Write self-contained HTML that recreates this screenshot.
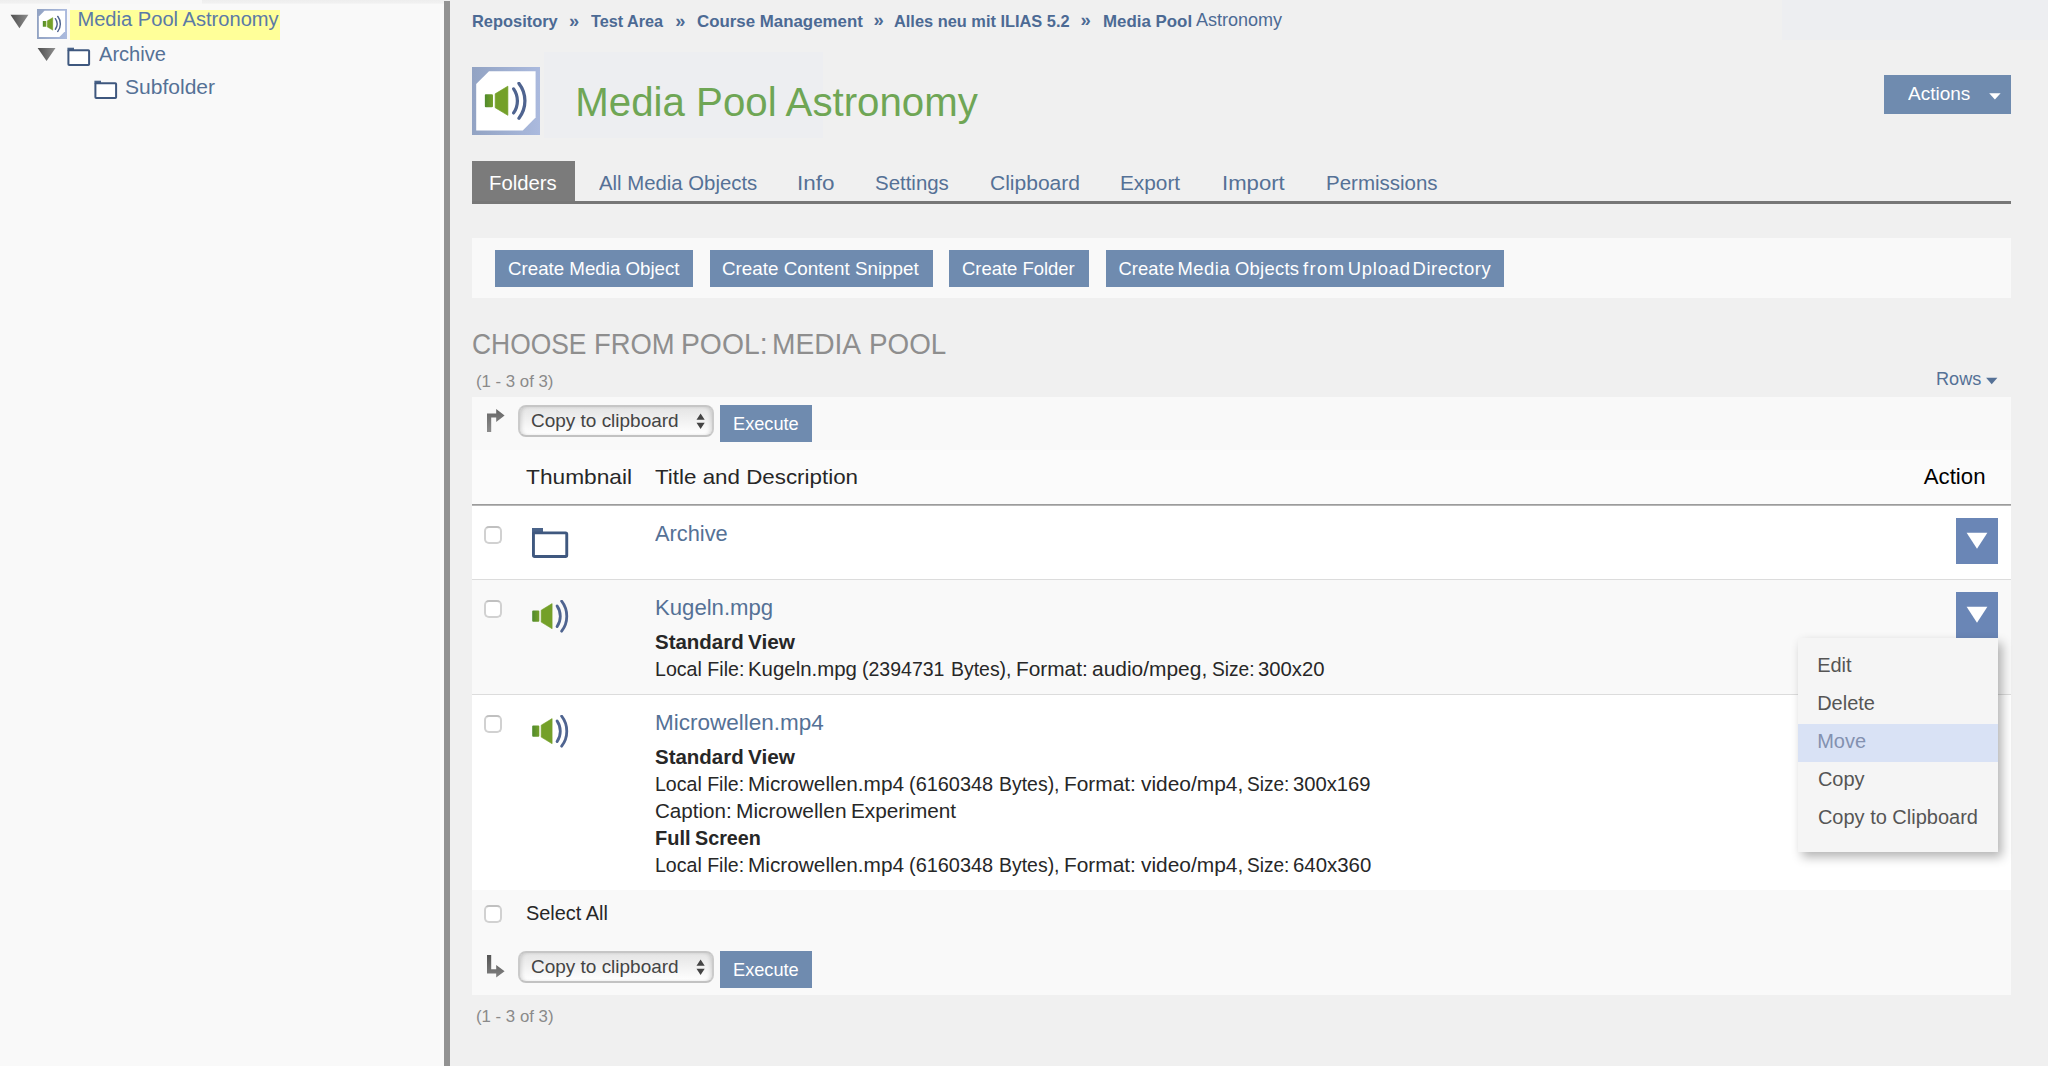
<!DOCTYPE html>
<html><head><meta charset="utf-8"><title>Media Pool Astronomy</title>
<style>
html,body{margin:0;padding:0}
body{width:2048px;height:1066px;overflow:hidden;position:relative;background:#f0f0f0;font-family:"Liberation Sans",sans-serif}
.a{position:absolute}
.t{position:absolute;white-space:nowrap;line-height:1;font-family:"Liberation Sans",sans-serif}
.btn{position:absolute;background:#6f8baf}
.cb{position:absolute;width:14px;height:14px;border:2px solid #d1d1d1;border-top-color:#c0c0c0;border-radius:5px;background:#fff}
.sel{position:absolute;width:192.4px;height:28.3px;border:2px solid #cbcbcb;border-top-color:#c6c6c6;border-bottom-color:#c2c2c2;border-radius:8px;background:linear-gradient(#e4e4e4,#f3f3f3 55%,#ffffff);box-shadow:inset 3px 0 4px -2px rgba(0,0,0,.16),inset -3px 0 4px -2px rgba(0,0,0,.16)}
</style></head><body>
<svg width="0" height="0" style="position:absolute">
<defs>
<linearGradient id="gfr" x1="0" y1="0" x2="1" y2="0"><stop offset="0" stop-color="#92a3c3"/><stop offset="1" stop-color="#abbade"/></linearGradient>
<linearGradient id="gtri" x1="0" y1="0" x2="1" y2="0"><stop offset="0" stop-color="#4e4e4e"/><stop offset="1" stop-color="#8e8e8e"/></linearGradient>
<linearGradient id="garr" x1="0" y1="0" x2="0" y2="1"><stop offset="0" stop-color="#666"/><stop offset="1" stop-color="#8c8c8c"/></linearGradient>
<linearGradient id="garr2" x1="0" y1="0" x2="0" y2="1"><stop offset="0" stop-color="#555"/><stop offset="1" stop-color="#808080"/></linearGradient>
<linearGradient id="ggr" x1="0" y1="0" x2="1" y2="0"><stop offset="0" stop-color="#4f8a2c"/><stop offset="1" stop-color="#74a029"/></linearGradient>
<symbol id="snd" viewBox="0 0 37 33">
<rect x="0.2" y="10.6" width="7.1" height="11.2" rx="1" fill="url(#ggr)"/>
<path d="M9.2 10.2 L20.1 3.6 L20.1 28.7 L9.2 22.1 Z" fill="#74a029" stroke="#74a029" stroke-width="0.6" stroke-linejoin="round"/>
<path d="M25.05 5.9 A18.1 18.1 0 0 1 25.05 26.6" fill="none" stroke="#4f6490" stroke-width="2.8" stroke-linecap="round"/>
<path d="M29.65 1.2 A24.5 24.5 0 0 1 29.65 31.2" fill="none" stroke="#4f6490" stroke-width="2.8" stroke-linecap="round"/>
</symbol>
<symbol id="sndf" viewBox="0 0 68 68">
<rect x="0" y="0" width="68" height="68" fill="url(#gfr)"/>
<path d="M17 4.2 L63.6 4.2 L63.6 50.6 L50.8 63.6 L4.2 63.6 L4.2 17 Z" fill="#fff"/>
<use href="#snd" x="12.5" y="15" width="43" height="38.35"/>
</symbol>
<symbol id="fld" viewBox="0 0 37 31">
<rect x="0" y="0" width="11" height="6" fill="#4a6389"/>
<rect x="1.45" y="4.75" width="33.4" height="24" rx="1.2" fill="#fff" stroke="#3f587f" stroke-width="2.9"/>
</symbol>
<symbol id="fldt" viewBox="0 0 37 31">
<rect x="0" y="0" width="11" height="6" fill="#4a6389"/>
<rect x="1.6" y="4.6" width="33.4" height="24.4" rx="1.2" fill="#fff" stroke="#3f587f" stroke-width="3.2"/>
</symbol>
</defs></svg>

<!-- left panel -->
<div class="a" style="left:0;top:0;width:444px;height:1066px;background:#f9f9f9"></div>
<div class="a" style="left:0;top:0;width:444px;height:4px;background:linear-gradient(#eeeeee,#f1f1f1 70%,#f6f6f6)"></div>
<div class="a" style="left:70px;top:0;width:132px;height:4px;background:#f8f8f8"></div>
<div class="a" style="left:444px;top:1px;width:6px;height:1065px;background:#929292"></div>

<!-- faint patches -->
<div class="a" style="left:543.6px;top:52.3px;width:279.8px;height:86.1px;background:#edeef1"></div>
<div class="a" style="left:1782px;top:0;width:266px;height:40px;background:#edeef1"></div>

<!-- tree -->
<svg class="a" style="left:10px;top:14px" width="19" height="15" viewBox="0 0 19 15"><path d="M0.5 0.8 L18.4 0.8 L9.45 14.2 Z" fill="url(#gtri)"/></svg>
<svg class="a" style="left:37px;top:9px" width="30" height="30"><use href="#sndf" width="30" height="30"/></svg>
<div class="a" style="left:70px;top:10px;width:210px;height:30px;background:#ffff99"></div>
<svg class="a" style="left:37px;top:47px" width="19" height="15" viewBox="0 0 19 15"><path d="M0.6 1 L18.5 1 L9.55 14.1 Z" fill="url(#gtri)"/></svg>
<svg class="a" style="left:67px;top:47px" width="24" height="20" viewBox="0 0 24 20"><rect x="0.4" y="0.7" width="6.6" height="3.2" fill="#4a6389"/><rect x="1.4" y="3.3" width="20.7" height="14.7" rx="0.8" fill="#fff" stroke="#3f587f" stroke-width="2"/></svg>
<svg class="a" style="left:94.1px;top:80px" width="24" height="20" viewBox="0 0 24 20"><rect x="0.4" y="0.7" width="6.6" height="3.2" fill="#4a6389"/><rect x="1.4" y="3.3" width="20.7" height="14.7" rx="0.8" fill="#fff" stroke="#3f587f" stroke-width="2"/></svg>

<!-- title icon -->
<svg class="a" style="left:472px;top:67px" width="68" height="68"><use href="#sndf" width="68" height="68"/></svg>

<!-- tabs -->
<div class="a" style="left:472px;top:161px;width:102.8px;height:42px;background:#7b7b7b"></div>
<div class="a" style="left:472px;top:201px;width:1539px;height:2.7px;background:#777777"></div>

<!-- actions button -->
<div class="btn" style="left:1883.6px;top:75px;width:127.6px;height:39px"></div>
<svg class="a" style="left:1989px;top:93px" width="12" height="7" viewBox="0 0 12 7"><path d="M0.2 0.2 L11.6 0.2 L5.9 6.6 Z" fill="#fff"/></svg>

<!-- toolbar -->
<div class="a" style="left:472px;top:238.4px;width:1539px;height:59.8px;background:#f9f9f9"></div>
<div class="btn" style="left:494.8px;top:249.6px;width:198.2px;height:37.2px"></div>
<div class="btn" style="left:709.6px;top:249.6px;width:223px;height:37.2px"></div>
<div class="btn" style="left:948.9px;top:249.6px;width:140px;height:37.2px"></div>
<div class="btn" style="left:1105.9px;top:249.6px;width:398.5px;height:37.2px"></div>

<!-- rows caret -->
<svg class="a" style="left:1986px;top:377px" width="12" height="8" viewBox="0 0 12 8"><path d="M0.1 0.7 L11.4 0.7 L5.75 7.2 Z" fill="#557196"/></svg>

<!-- table -->
<div class="a" style="left:472px;top:397.4px;width:1539px;height:53px;background:#f9f9f9"></div>
<div class="a" style="left:472px;top:449.8px;width:1539px;height:55px;background:#fbfbfb"></div>
<div class="a" style="left:472px;top:503.8px;width:1539px;height:2.4px;background:linear-gradient(#9c9c9c,#9c9c9c 55%,#d8d8d8)"></div>
<div class="a" style="left:472px;top:506px;width:1539px;height:73.4px;background:#ffffff"></div>
<div class="a" style="left:472px;top:578.8px;width:1539px;height:1.6px;background:#dcdcdc"></div>
<div class="a" style="left:472px;top:580.4px;width:1539px;height:113.6px;background:#f9f9f9"></div>
<div class="a" style="left:472px;top:693.8px;width:1539px;height:1.6px;background:#dcdcdc"></div>
<div class="a" style="left:472px;top:695.4px;width:1539px;height:195px;background:#ffffff"></div>
<div class="a" style="left:472px;top:890.3px;width:1539px;height:104.6px;background:#f9f9f9"></div>

<!-- nav top -->
<svg class="a" style="left:486px;top:408px" width="20" height="25" viewBox="0 0 20 25"><path d="M1 24 L1 5.4 L10.2 5.4 L10.2 1.1 L18.6 7.5 L10.2 14 L10.2 9.6 L5.2 9.6 L5.2 24 Z" fill="url(#garr)"/></svg>
<div class="sel" style="left:518.1px;top:405.1px"></div>
<svg class="a" style="left:695.5px;top:412.8px" width="10" height="17" viewBox="0 0 10 17"><path d="M4.6 0.6 L8.7 6.7 L0.5 6.7 Z M0.5 9.8 L8.7 9.8 L4.6 15.9 Z" fill="#444"/></svg>
<div class="btn" style="left:720px;top:405px;width:92px;height:37px"></div>

<!-- nav bottom -->
<svg class="a" style="left:486px;top:954px" width="20" height="25" viewBox="0 0 20 25"><path d="M1 1 L5.2 1 L5.2 15.3 L10.2 15.3 L10.2 10.9 L18.6 17.2 L10.2 23.5 L10.2 19.5 L1 19.5 Z" fill="url(#garr2)"/></svg>
<div class="sel" style="left:518.1px;top:950.8px"></div>
<svg class="a" style="left:695.5px;top:958.6px" width="10" height="17" viewBox="0 0 10 17"><path d="M4.6 0.6 L8.7 6.7 L0.5 6.7 Z M0.5 9.8 L8.7 9.8 L4.6 15.9 Z" fill="#444"/></svg>
<div class="btn" style="left:720px;top:950.5px;width:92px;height:37.4px"></div>

<!-- checkboxes -->
<div class="cb" style="left:484px;top:526px"></div>
<div class="cb" style="left:484px;top:600px"></div>
<div class="cb" style="left:484px;top:715px"></div>
<div class="cb" style="left:484px;top:905.4px"></div>

<!-- row icons -->
<svg class="a" style="left:532.1px;top:527.6px" width="37" height="31" viewBox="0 0 37 31"><rect x="0" y="0" width="11" height="6" fill="#4a6389"/><rect x="1.45" y="4.85" width="33.3" height="23.6" rx="1.2" fill="#fff" stroke="#3f587f" stroke-width="2.9"/></svg>
<svg class="a" style="left:532px;top:599.8px" width="37" height="33"><use href="#snd" width="37" height="33"/></svg>
<svg class="a" style="left:532px;top:715px" width="37" height="33"><use href="#snd" width="37" height="33"/></svg>

<!-- dropdown buttons -->
<div class="a" style="left:1956px;top:517.8px;width:42px;height:46.4px;background:#6a86b6"></div>
<svg class="a" style="left:1966px;top:532px" width="22" height="18" viewBox="0 0 22 18"><path d="M0.6 0.8 L21.4 0.8 L11 16.8 Z" fill="#fff"/></svg>
<div class="a" style="left:1956px;top:592px;width:42px;height:46.4px;background:#6a86b6"></div>
<svg class="a" style="left:1966px;top:606.2px" width="22" height="18" viewBox="0 0 22 18"><path d="M0.6 0.8 L21.4 0.8 L11 16.8 Z" fill="#fff"/></svg>

<!-- menu -->
<div class="a" style="left:1798px;top:638.3px;width:200px;height:213.7px;background:#f5f5f5;box-shadow:4px 5px 10px rgba(0,0,0,.3)"></div>
<div class="a" style="left:1798px;top:724px;width:200px;height:38px;background:#d9e2f5"></div>

<span id="t0" class="t" style="left:77.44px;top:9.00px;font-size:20.11px;color:#5b7aa6;font-weight:400;letter-spacing:0.000px;">Media Pool Astronomy</span>
<span id="t1" class="t" style="left:98.59px;top:45.00px;font-size:19.90px;color:#557196;font-weight:400;letter-spacing:0.000px;transform:scaleX(1.0096);transform-origin:0 0;">Archive</span>
<span id="t2" class="t" style="left:124.69px;top:78.00px;font-size:19.90px;color:#557196;font-weight:400;letter-spacing:0.000px;transform:scaleX(1.0580);transform-origin:0 0;">Subfolder</span>
<span id="t3" class="t" style="left:472.43px;top:14.00px;font-size:16.90px;color:#4c6a94;font-weight:700;letter-spacing:0.000px;transform:scaleX(0.9718);transform-origin:0 0;">Repository</span>
<span id="t4" class="t" style="left:569.04px;top:12.00px;font-size:18.24px;color:#4c6a94;font-weight:700;letter-spacing:0.000px;">»</span>
<span id="t5" class="t" style="left:590.56px;top:14.00px;font-size:16.90px;color:#4c6a94;font-weight:700;letter-spacing:0.000px;transform:scaleX(0.9603);transform-origin:0 0;">Test Area</span>
<span id="t6" class="t" style="left:675.22px;top:12.00px;font-size:18.23px;color:#4c6a94;font-weight:700;letter-spacing:0.000px;">»</span>
<span id="t7" class="t" style="left:696.51px;top:14.00px;font-size:16.90px;color:#4c6a94;font-weight:700;letter-spacing:0.000px;transform:scaleX(0.9980);transform-origin:0 0;">Course Management</span>
<span id="t8" class="t" style="left:873.47px;top:11.00px;font-size:18.43px;color:#4c6a94;font-weight:700;letter-spacing:0.000px;">»</span>
<span id="t9" class="t" style="left:894.24px;top:14.00px;font-size:16.90px;color:#4c6a94;font-weight:700;letter-spacing:0.000px;transform:scaleX(0.9693);transform-origin:0 0;">Alles neu mit ILIAS 5.2</span>
<span id="t10" class="t" style="left:1080.47px;top:11.00px;font-size:18.43px;color:#4c6a94;font-weight:700;letter-spacing:0.000px;">»</span>
<span id="t11" class="t" style="left:1102.75px;top:14.00px;font-size:16.90px;color:#4c6a94;font-weight:700;letter-spacing:0.000px;transform:scaleX(0.9991);transform-origin:0 0;">Media Pool</span>
<span id="t12" class="t" style="left:1196.03px;top:11.00px;font-size:18.03px;color:#4c6a94;font-weight:400;letter-spacing:0.000px;">Astronomy</span>
<span id="t13" class="t" style="left:575.31px;top:83.00px;font-size:40.24px;color:#6fa655;font-weight:400;letter-spacing:0.000px;">Media Pool Astronomy</span>
<span id="t14" class="t" style="left:489.47px;top:174.00px;font-size:19.90px;color:#ffffff;font-weight:400;letter-spacing:0.000px;transform:scaleX(1.0199);transform-origin:0 0;">Folders</span>
<span id="t15" class="t" style="left:598.59px;top:174.00px;font-size:19.90px;color:#557196;font-weight:400;letter-spacing:0.000px;transform:scaleX(1.0224);transform-origin:0 0;">All Media Objects</span>
<span id="t16" class="t" style="left:797.26px;top:174.00px;font-size:19.90px;color:#557196;font-weight:400;letter-spacing:0.000px;transform:scaleX(1.1279);transform-origin:0 0;">Info</span>
<span id="t17" class="t" style="left:874.87px;top:174.00px;font-size:19.90px;color:#557196;font-weight:400;letter-spacing:0.000px;transform:scaleX(1.0270);transform-origin:0 0;">Settings</span>
<span id="t18" class="t" style="left:990.26px;top:174.00px;font-size:19.90px;color:#557196;font-weight:400;letter-spacing:0.000px;transform:scaleX(1.0568);transform-origin:0 0;">Clipboard</span>
<span id="t19" class="t" style="left:1120.19px;top:174.00px;font-size:19.90px;color:#557196;font-weight:400;letter-spacing:0.000px;transform:scaleX(1.0457);transform-origin:0 0;">Export</span>
<span id="t20" class="t" style="left:1221.78px;top:174.00px;font-size:19.90px;color:#557196;font-weight:400;letter-spacing:0.000px;transform:scaleX(1.1133);transform-origin:0 0;">Import</span>
<span id="t21" class="t" style="left:1326.39px;top:174.00px;font-size:19.90px;color:#557196;font-weight:400;letter-spacing:0.000px;transform:scaleX(1.0303);transform-origin:0 0;">Permissions</span>
<span id="t22" class="t" style="left:1907.59px;top:85.00px;font-size:18.40px;color:#ffffff;font-weight:400;letter-spacing:0.000px;transform:scaleX(1.0335);transform-origin:0 0;">Actions</span>
<span id="t23" class="t" style="left:507.53px;top:260.00px;font-size:18.40px;color:#ffffff;font-weight:400;letter-spacing:0.000px;transform:scaleX(1.0171);transform-origin:0 0;">Create Media Object</span>
<span id="t24" class="t" style="left:722.20px;top:260.00px;font-size:18.40px;color:#ffffff;font-weight:400;letter-spacing:0.000px;transform:scaleX(1.0236);transform-origin:0 0;">Create Content Snippet</span>
<span id="t25" class="t" style="left:961.70px;top:260.00px;font-size:18.40px;color:#ffffff;font-weight:400;letter-spacing:0.000px;transform:scaleX(1.0027);transform-origin:0 0;">Create Folder</span>
<span id="t26" class="t" style="left:1118.42px;top:260.00px;font-size:18.40px;color:#ffffff;font-weight:400;letter-spacing:0.105px;">Create</span>
<span id="t27" class="t" style="left:1177.53px;top:260.00px;font-size:18.40px;color:#ffffff;font-weight:400;letter-spacing:0.513px;">Media</span>
<span id="t28" class="t" style="left:1234.99px;top:260.00px;font-size:18.40px;color:#ffffff;font-weight:400;letter-spacing:0.286px;">Objects</span>
<span id="t29" class="t" style="left:1302.88px;top:260.00px;font-size:18.40px;color:#ffffff;font-weight:400;letter-spacing:1.443px;">from</span>
<span id="t30" class="t" style="left:1347.76px;top:260.00px;font-size:18.40px;color:#ffffff;font-weight:400;letter-spacing:0.770px;">Upload</span>
<span id="t31" class="t" style="left:1412.53px;top:260.00px;font-size:18.40px;color:#ffffff;font-weight:400;letter-spacing:0.584px;">Directory</span>
<span id="t32" class="t" style="left:472.34px;top:330.00px;font-size:28.80px;color:#8e8e8e;font-weight:400;letter-spacing:0.000px;transform:scaleX(0.9169);transform-origin:0 0;">CHOOSE</span>
<span id="t33" class="t" style="left:593.85px;top:330.00px;font-size:28.80px;color:#8e8e8e;font-weight:400;letter-spacing:0.000px;transform:scaleX(0.9509);transform-origin:0 0;">FROM</span>
<span id="t34" class="t" style="left:680.52px;top:330.00px;font-size:28.80px;color:#8e8e8e;font-weight:400;letter-spacing:0.000px;transform:scaleX(0.9826);transform-origin:0 0;">POOL:</span>
<span id="t35" class="t" style="left:772.04px;top:330.00px;font-size:28.80px;color:#8e8e8e;font-weight:400;letter-spacing:0.000px;transform:scaleX(0.9772);transform-origin:0 0;">MEDIA</span>
<span id="t36" class="t" style="left:868.77px;top:330.00px;font-size:28.80px;color:#8e8e8e;font-weight:400;letter-spacing:0.000px;transform:scaleX(0.9655);transform-origin:0 0;">POOL</span>
<span id="t37" class="t" style="left:475.89px;top:374.00px;font-size:16.80px;color:#8a8a8a;font-weight:400;letter-spacing:0.000px;transform:scaleX(1.0006);transform-origin:0 0;">(1 - 3 of 3)</span>
<span id="t38" class="t" style="left:1935.53px;top:370.00px;font-size:18.40px;color:#557196;font-weight:400;letter-spacing:0.000px;transform:scaleX(0.9839);transform-origin:0 0;">Rows</span>
<span id="t39" class="t" style="left:530.51px;top:412.00px;font-size:18.40px;color:#444444;font-weight:400;letter-spacing:0.000px;transform:scaleX(1.0314);transform-origin:0 0;">Copy to clipboard</span>
<span id="t40" class="t" style="left:732.99px;top:415.00px;font-size:18.40px;color:#ffffff;font-weight:400;letter-spacing:0.000px;transform:scaleX(0.9893);transform-origin:0 0;">Execute</span>
<span id="t41" class="t" style="left:525.52px;top:466.00px;font-size:21.10px;color:#272727;font-weight:400;letter-spacing:0.000px;transform:scaleX(1.0772);transform-origin:0 0;">Thumbnail</span>
<span id="t42" class="t" style="left:655.18px;top:466.00px;font-size:21.10px;color:#272727;font-weight:400;letter-spacing:0.000px;transform:scaleX(1.0602);transform-origin:0 0;">Title and Description</span>
<span id="t43" class="t" style="left:1923.82px;top:466.00px;font-size:22.20px;color:#000000;font-weight:400;letter-spacing:0.000px;">Action</span>
<span id="t44" class="t" style="left:655.32px;top:524.00px;font-size:21.40px;color:#557196;font-weight:400;letter-spacing:0.000px;transform:scaleX(1.0196);transform-origin:0 0;">Archive</span>
<span id="t45" class="t" style="left:654.61px;top:598.00px;font-size:21.40px;color:#557196;font-weight:400;letter-spacing:0.000px;transform:scaleX(1.0350);transform-origin:0 0;">Kugeln.mpg</span>
<span id="t46" class="t" style="left:655.45px;top:633.00px;font-size:19.90px;color:#272727;font-weight:700;letter-spacing:0.000px;transform:scaleX(1.0280);transform-origin:0 0;">Standard</span>
<span id="t47" class="t" style="left:748.48px;top:633.00px;font-size:19.90px;color:#272727;font-weight:700;letter-spacing:0.000px;transform:scaleX(1.0445);transform-origin:0 0;">View</span>
<span id="t48" class="t" style="left:655.09px;top:660.00px;font-size:19.90px;color:#272727;font-weight:400;letter-spacing:0.000px;transform:scaleX(0.9858);transform-origin:0 0;">Local File:</span>
<span id="t49" class="t" style="left:748.36px;top:660.00px;font-size:19.90px;color:#272727;font-weight:400;letter-spacing:0.000px;transform:scaleX(1.0254);transform-origin:0 0;">Kugeln.mpg</span>
<span id="t50" class="t" style="left:861.51px;top:660.00px;font-size:19.90px;color:#272727;font-weight:400;letter-spacing:0.000px;transform:scaleX(0.9811);transform-origin:0 0;">(2394731</span>
<span id="t51" class="t" style="left:951.07px;top:660.00px;font-size:19.90px;color:#272727;font-weight:400;letter-spacing:0.000px;transform:scaleX(0.9768);transform-origin:0 0;">Bytes),</span>
<span id="t52" class="t" style="left:1016.09px;top:660.00px;font-size:19.90px;color:#272727;font-weight:400;letter-spacing:0.000px;transform:scaleX(1.0477);transform-origin:0 0;">Format:</span>
<span id="t53" class="t" style="left:1092.48px;top:660.00px;font-size:19.90px;color:#272727;font-weight:400;letter-spacing:0.000px;transform:scaleX(1.0522);transform-origin:0 0;">audio/mpeg,</span>
<span id="t54" class="t" style="left:1212.11px;top:660.00px;font-size:19.90px;color:#272727;font-weight:400;letter-spacing:0.000px;transform:scaleX(0.9627);transform-origin:0 0;">Size:</span>
<span id="t55" class="t" style="left:1258.30px;top:660.00px;font-size:19.90px;color:#272727;font-weight:400;letter-spacing:0.000px;transform:scaleX(1.0198);transform-origin:0 0;">300x20</span>
<span id="t56" class="t" style="left:654.51px;top:713.00px;font-size:21.40px;color:#557196;font-weight:400;letter-spacing:0.000px;transform:scaleX(1.0517);transform-origin:0 0;">Microwellen.mp4</span>
<span id="t57" class="t" style="left:655.45px;top:748.00px;font-size:19.90px;color:#272727;font-weight:700;letter-spacing:0.000px;transform:scaleX(1.0280);transform-origin:0 0;">Standard</span>
<span id="t58" class="t" style="left:748.48px;top:748.00px;font-size:19.90px;color:#272727;font-weight:700;letter-spacing:0.000px;transform:scaleX(1.0445);transform-origin:0 0;">View</span>
<span id="t59" class="t" style="left:655.42px;top:775.00px;font-size:19.90px;color:#272727;font-weight:400;letter-spacing:0.000px;transform:scaleX(0.9829);transform-origin:0 0;">Local File:</span>
<span id="t60" class="t" style="left:748.44px;top:775.00px;font-size:19.90px;color:#272727;font-weight:400;letter-spacing:0.000px;transform:scaleX(1.0458);transform-origin:0 0;">Microwellen.mp4</span>
<span id="t61" class="t" style="left:909.36px;top:775.00px;font-size:19.90px;color:#272727;font-weight:400;letter-spacing:0.000px;transform:scaleX(1.0011);transform-origin:0 0;">(6160348</span>
<span id="t62" class="t" style="left:999.04px;top:775.00px;font-size:19.90px;color:#272727;font-weight:400;letter-spacing:0.000px;transform:scaleX(0.9777);transform-origin:0 0;">Bytes),</span>
<span id="t63" class="t" style="left:1064.21px;top:775.00px;font-size:19.90px;color:#272727;font-weight:400;letter-spacing:0.000px;transform:scaleX(1.0484);transform-origin:0 0;">Format:</span>
<span id="t64" class="t" style="left:1140.75px;top:775.00px;font-size:19.90px;color:#272727;font-weight:400;letter-spacing:0.000px;transform:scaleX(1.0516);transform-origin:0 0;">video/mp4,</span>
<span id="t65" class="t" style="left:1247.21px;top:775.00px;font-size:19.90px;color:#272727;font-weight:400;letter-spacing:0.000px;transform:scaleX(0.9577);transform-origin:0 0;">Size:</span>
<span id="t66" class="t" style="left:1293.25px;top:775.00px;font-size:19.90px;color:#272727;font-weight:400;letter-spacing:0.000px;transform:scaleX(1.0154);transform-origin:0 0;">300x169</span>
<span id="t67" class="t" style="left:655.29px;top:802.00px;font-size:19.90px;color:#272727;font-weight:400;letter-spacing:0.000px;transform:scaleX(1.0347);transform-origin:0 0;">Caption:</span>
<span id="t68" class="t" style="left:735.71px;top:802.00px;font-size:19.90px;color:#272727;font-weight:400;letter-spacing:0.000px;transform:scaleX(1.0529);transform-origin:0 0;">Microwellen</span>
<span id="t69" class="t" style="left:850.71px;top:802.00px;font-size:19.90px;color:#272727;font-weight:400;letter-spacing:0.000px;transform:scaleX(1.0446);transform-origin:0 0;">Experiment</span>
<span id="t70" class="t" style="left:655.39px;top:829.00px;font-size:19.90px;color:#272727;font-weight:700;letter-spacing:0.000px;transform:scaleX(1.0049);transform-origin:0 0;">Full</span>
<span id="t71" class="t" style="left:695.29px;top:829.00px;font-size:19.90px;color:#272727;font-weight:700;letter-spacing:0.000px;transform:scaleX(0.9935);transform-origin:0 0;">Screen</span>
<span id="t72" class="t" style="left:655.42px;top:856.00px;font-size:19.90px;color:#272727;font-weight:400;letter-spacing:0.000px;transform:scaleX(0.9829);transform-origin:0 0;">Local File:</span>
<span id="t73" class="t" style="left:748.44px;top:856.00px;font-size:19.90px;color:#272727;font-weight:400;letter-spacing:0.000px;transform:scaleX(1.0458);transform-origin:0 0;">Microwellen.mp4</span>
<span id="t74" class="t" style="left:909.36px;top:856.00px;font-size:19.90px;color:#272727;font-weight:400;letter-spacing:0.000px;transform:scaleX(1.0011);transform-origin:0 0;">(6160348</span>
<span id="t75" class="t" style="left:999.04px;top:856.00px;font-size:19.90px;color:#272727;font-weight:400;letter-spacing:0.000px;transform:scaleX(0.9777);transform-origin:0 0;">Bytes),</span>
<span id="t76" class="t" style="left:1064.21px;top:856.00px;font-size:19.90px;color:#272727;font-weight:400;letter-spacing:0.000px;transform:scaleX(1.0484);transform-origin:0 0;">Format:</span>
<span id="t77" class="t" style="left:1140.75px;top:856.00px;font-size:19.90px;color:#272727;font-weight:400;letter-spacing:0.000px;transform:scaleX(1.0516);transform-origin:0 0;">video/mp4,</span>
<span id="t78" class="t" style="left:1247.21px;top:856.00px;font-size:19.90px;color:#272727;font-weight:400;letter-spacing:0.000px;transform:scaleX(0.9577);transform-origin:0 0;">Size:</span>
<span id="t79" class="t" style="left:1293.10px;top:856.00px;font-size:19.90px;color:#272727;font-weight:400;letter-spacing:0.000px;transform:scaleX(1.0249);transform-origin:0 0;">640x360</span>
<span id="t80" class="t" style="left:525.83px;top:904.00px;font-size:19.90px;color:#272727;font-weight:400;letter-spacing:0.000px;transform:scaleX(1.0014);transform-origin:0 0;">Select All</span>
<span id="t81" class="t" style="left:530.51px;top:958.00px;font-size:18.40px;color:#444444;font-weight:400;letter-spacing:0.000px;transform:scaleX(1.0314);transform-origin:0 0;">Copy to clipboard</span>
<span id="t82" class="t" style="left:732.99px;top:961.00px;font-size:18.40px;color:#ffffff;font-weight:400;letter-spacing:0.000px;transform:scaleX(0.9893);transform-origin:0 0;">Execute</span>
<span id="t83" class="t" style="left:475.89px;top:1009.00px;font-size:16.80px;color:#8a8a8a;font-weight:400;letter-spacing:0.000px;transform:scaleX(1.0013);transform-origin:0 0;">(1 - 3 of 3)</span>
<span id="t84" class="t" style="left:1817.15px;top:655.00px;font-size:20.00px;color:#555555;font-weight:400;letter-spacing:0.000px;">Edit</span>
<span id="t85" class="t" style="left:1817.15px;top:693.00px;font-size:20.00px;color:#555555;font-weight:400;letter-spacing:0.000px;">Delete</span>
<span id="t86" class="t" style="left:1817.15px;top:731.00px;font-size:20.00px;color:#8391b0;font-weight:400;letter-spacing:0.000px;">Move</span>
<span id="t87" class="t" style="left:1817.90px;top:769.00px;font-size:20.00px;color:#555555;font-weight:400;letter-spacing:0.000px;">Copy</span>
<span id="t88" class="t" style="left:1817.90px;top:807.00px;font-size:20.00px;color:#555555;font-weight:400;letter-spacing:0.000px;">Copy to Clipboard</span>
</body></html>
